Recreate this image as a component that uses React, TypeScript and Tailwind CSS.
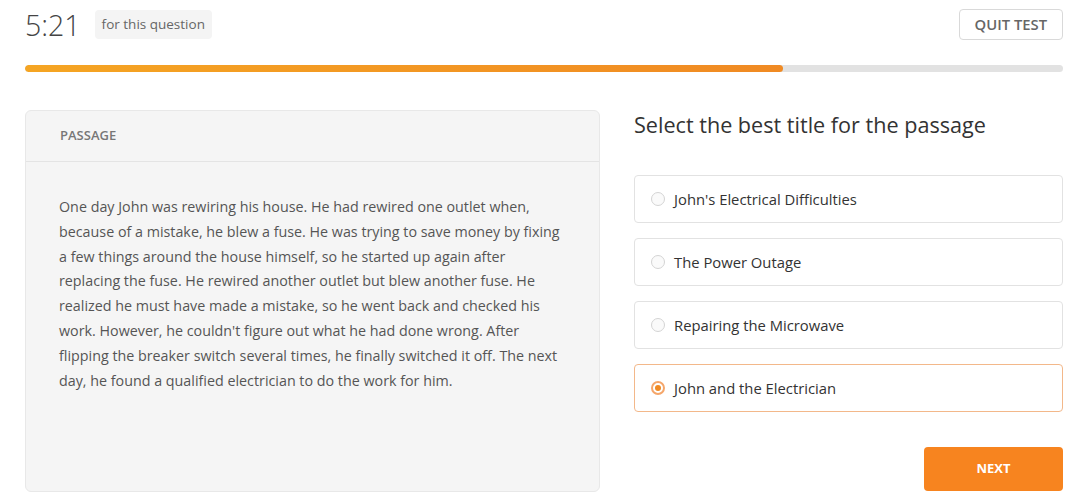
const PASSAGE =
  "One day John was rewiring his house. He had rewired one outlet when, because of a mistake, he blew a fuse. He was trying to save money by fixing a few things around the house himself, so he started up again after replacing the fuse. He rewired another outlet but blew another fuse. He realized he must have made a mistake, so he went back and checked his work. However, he couldn't figure out what he had done wrong. After flipping the breaker switch several times, he finally switched it off. The next day, he found a qualified electrician to do the work for him.";

const OPTIONS = [
  "John's Electrical Difficulties",
  "The Power Outage",
  "Repairing the Microwave",
  "John and the Electrician",
];

const App = () => {
  const selected = 3;

  return (
    <div className="w-[1080px] h-[495px] bg-white overflow-hidden font-['Open_Sans',sans-serif] text-[#333]">
      {/* top bar */}
      <div className="flex items-center justify-between pl-[25px] pr-[17px] pt-[9px]">
        <div className="flex items-center gap-[14px]">
          <span className="text-[28.5px] font-light leading-[30px] text-[#444]">5:21</span>
          <span className="px-[7px] py-[4px] rounded bg-[#f4f4f4] text-[13.5px] text-[#666]">
            for this question
          </span>
        </div>
        <button className="h-[31px] px-[15px] rounded border border-[#d9d9d9] text-[14.8px] font-semibold text-[#666]">
          QUIT TEST
        </button>
      </div>

      {/* progress */}
      <div className="mx-[25px] mt-[25px] mr-[17px] h-[7px] rounded-full bg-[#e2e2e2] overflow-hidden">
        <div className="h-full w-[73%] rounded-full bg-gradient-to-r from-[#f5a523] to-[#f08a23]" />
      </div>

      <div className="flex gap-[34px] pl-[25px] pr-[17px] mt-[38px]">
        {/* passage */}
        <div className="w-[575px] h-[382px] shrink-0 rounded-md border border-[#e8e8e8] bg-[#f5f5f5]">
          <div className="h-[51px] flex items-center px-[34px] border-b border-[#e4e4e4] text-[13px] font-semibold text-[#777]">
            PASSAGE
          </div>
          <p className="px-[33px] pt-[33px] pr-[36px] text-[14.3px] leading-[24.8px] text-[#555]">
            {PASSAGE}
          </p>
        </div>

        {/* question */}
        <div className="flex-1 flex flex-col">
          <h2 className="text-[21.6px] leading-[30px] text-[#333]">
            Select the best title for the passage
          </h2>
          <div className="mt-[35px] flex flex-col gap-[15px]">
            {OPTIONS.map((opt, i) => {
              const isSel = i === selected;
              return (
                <div
                  key={opt}
                  className={`h-[48px] flex items-center gap-[9px] px-[16px] rounded border bg-white ${
                    isSel ? "border-[#f3b88a]" : "border-[#e2e2e2]"
                  }`}
                >
                  {isSel ? (
                    <span className="w-[14px] h-[14px] rounded-full border-2 border-[#f5a66a] flex items-center justify-center">
                      <span className="w-[6px] h-[6px] rounded-full bg-[#f08a23]" />
                    </span>
                  ) : (
                    <span className="w-[14px] h-[14px] rounded-full border border-[#d4d4d4] bg-[#fafafa]" />
                  )}
                  <span className="text-[14.8px] text-[#333]">{opt}</span>
                </div>
              );
            })}
          </div>
          <div className="flex justify-end mt-[35px]">
            <button className="w-[139px] h-[44px] rounded bg-[#f7841f] text-white text-[13px] font-bold">
              NEXT
            </button>
          </div>
        </div>
      </div>
    </div>
  );
};

export default App;
